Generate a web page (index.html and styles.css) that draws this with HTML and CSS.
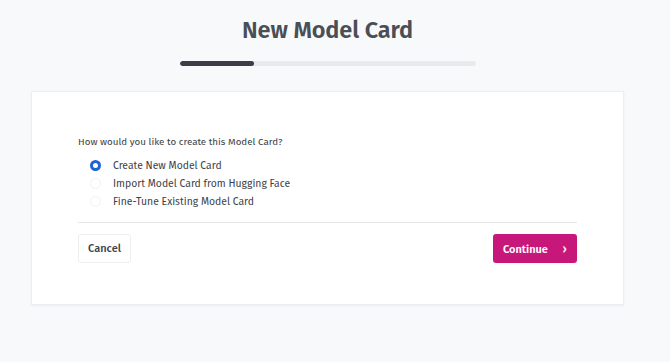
FILE: index.html
```html
<!DOCTYPE html>
<html>
<head>
<meta charset="utf-8">
<link rel="stylesheet" href="styles.css">
</head>
<body>
<div class="page">
  <h1 class="title">New Model Card</h1>
  <div class="progress"><div class="progress-fill" style="width:25%"></div></div>
  <div class="card">
    <p class="question">How would you like to create this Model Card?</p>
    <div class="options">
      <label class="option"><span class="radio checked"></span><span>Create New Model Card</span></label>
      <label class="option"><span class="radio"></span><span>Import Model Card from Hugging Face</span></label>
      <label class="option"><span class="radio"></span><span>Fine-Tune Existing Model Card</span></label>
    </div>
    <div class="divider"></div>
    <div class="actions">
      <button class="btn btn-cancel">Cancel</button>
      <button class="btn btn-continue">Continue <span class="chev">›</span></button>
    </div>
  </div>
</div>
</body>
</html>
```

FILE: styles.css
```css
html, body {
  margin: 0;
  padding: 0;
  background: #f8f9fb;
  font-family: "Fira Sans", "Open Sans", "Noto Sans", sans-serif;
  color: #3d4148;
}
.page {
  width: 655px;
  height: 362px;
  display: flex;
  flex-direction: column;
  align-items: center;
}
.title {
  margin: 15px 0 0;
  height: 31px;
  line-height: 31px;
  font-size: 23.5px;
  font-weight: 600;
  color: #4a4e55;
  letter-spacing: -0.1px;
}
.progress {
  margin-top: 15px;
  width: 296px;
  height: 5px;
  border-radius: 3px;
  background: #e9eaee;
  overflow: hidden;
}
.progress-fill {
  height: 100%;
  background: #3a3e46;
  border-radius: 3px;
}
.card {
  margin-top: 25px;
  width: 593px;
  box-sizing: border-box;
  height: 214px;
  background: #fff;
  border: 1px solid #eceef1;
  box-shadow: 0 1px 2px rgba(0,0,0,0.06);
  padding: 42px 46px 0;
}
.question {
  margin: 0;
  font-size: 9.8px;
  line-height: 16px;
  color: #3d4148;
}
.options {
  margin-top: 6px;
  padding-left: 12px;
  display: flex;
  flex-direction: column;
}
.option {
  display: flex;
  align-items: center;
  height: 18px;
  font-size: 10.4px;
  color: #3d4148;
}
.radio {
  width: 11px;
  height: 11px;
  box-sizing: border-box;
  border-radius: 50%;
  border: 1px solid #f1f2f4;
  margin-right: 12px;
  flex: none;
}
.radio.checked {
  border: 3px solid #1d64d8;
}
.divider {
  margin-top: 12px;
  height: 1px;
  background: #e6e7ea;
}
.actions {
  margin-top: 11px;
  display: flex;
  justify-content: space-between;
  align-items: center;
}
.btn {
  font-family: inherit;
  font-size: 11px;
  font-weight: 500;
  height: 29px;
  border-radius: 3px;
  cursor: pointer;
}
.btn-cancel {
  width: 53px;
  background: #fff;
  border: 1px solid #eceef1;
  color: #3d4148;
}
.btn-continue {
  width: 84px;
  height: 29px;
  background: #c8177b;
  border: none;
  color: #fff;
  font-weight: 600;
  padding: 0 0 0 10px;
  text-align: left;
}
.chev {
  margin-left: 12px;
  font-size: 12px;
  opacity: 0.85;
}
```
